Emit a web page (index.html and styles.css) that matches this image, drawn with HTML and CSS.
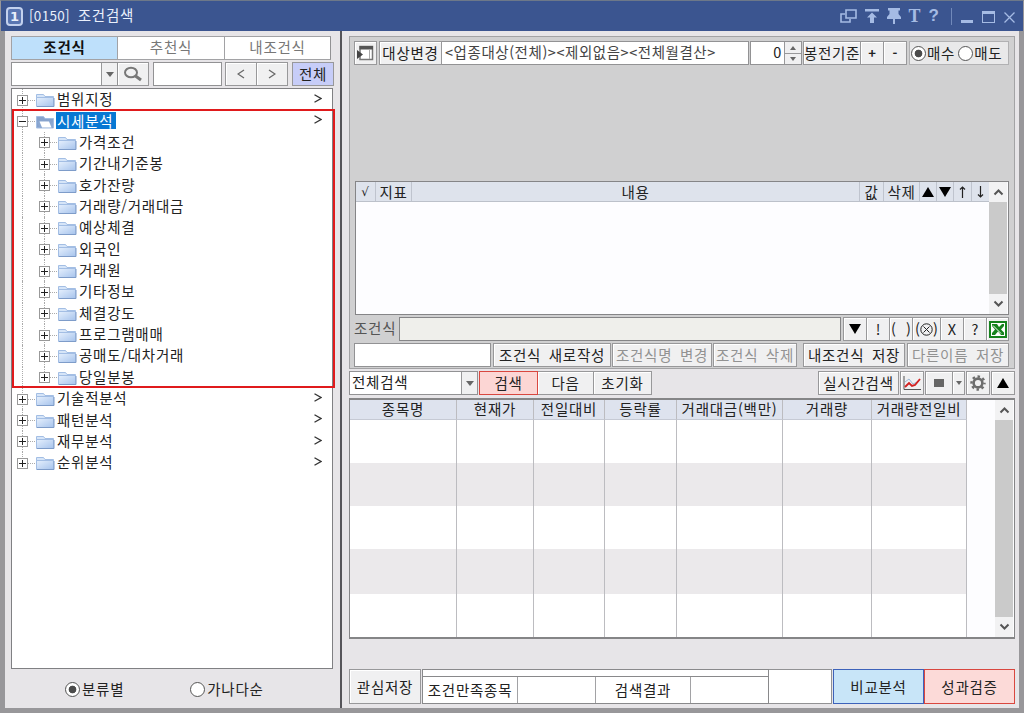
FILE: index.html
```html
<!DOCTYPE html>
<html lang="ko">
<head>
    <meta charset="UTF-8">
    <meta name="viewport" content="width=device-width, initial-scale=1.0">
    <title>[0150] 조건검색</title>
    <link rel="stylesheet" href="styles.css">
</head>
<body>
    <div class="window">
        <header class="titlebar">
            <span class="win-no">1</span>
            <span class="title"><span class="code">[0150]</span> 조건검색</span>
            <div class="win-icons">
                <svg class="i-copy" width="17" height="15" viewBox="0 0 17 15" fill="none" stroke="currentColor" stroke-width="1.6"><path d="M6 1h10v8H6zM5 5H1v8h9v-3"/></svg>
                <svg class="i-up" width="14" height="14" viewBox="0 0 14 14" fill="currentColor"><path d="M0 0h14v2.4H0zM7 3.5l5 5H9V14H5V8.500H2z"/></svg>
                <svg class="i-pin" width="14" height="16" viewBox="0 0 14 16" fill="currentColor"><path d="M1 0h12v2.500h-1.500V6L14 9v2H8v5H6v-5H0V9l2.500-3V2.500H1z"/></svg>
                <span class="i-text">T</span>
                <span class="i-help">?</span>
                <span class="i-sep"></span>
                <span class="i-min"></span>
                <span class="i-max"></span>
                <svg class="i-close" width="11" height="11" viewBox="0 0 11 11" fill="none" stroke="currentColor" stroke-width="1.3"><path d="M.5.5l10 10M10.500.5l-10 10"/></svg>
            </div>
        </header>

        <div class="content">
            <aside class="side">
                <div class="tabs">
                    <div class="tab active">조건식</div>
                    <div class="tab">추천식</div>
                    <div class="tab">내조건식</div>
                </div>
                <div class="side-tools">
                    <div class="combo side-combo"><span class="combo-text"></span><span class="combo-arrow"><i class="caret"></i></span></div>
                    <button class="btn search-btn">
                        <svg width="20" height="16" viewBox="0 0 20 16" fill="none" stroke="#777"><ellipse cx="8" cy="6.500" rx="6" ry="4.800" stroke-width="2"/><path d="M12.500 10l5.500 4" stroke-width="3"/></svg>
                    </button>
                    <div class="field side-field"></div>
                    <button class="btn nav-btn"><svg width="8" height="10" viewBox="0 0 8 10" fill="none" stroke="#666" stroke-width="1.300"><path d="M7 1L1 5l6 4"/></svg></button>
                    <button class="btn nav-btn next"><svg width="8" height="10" viewBox="0 0 8 10" fill="none" stroke="#666" stroke-width="1.300"><path d="M1 1l6 4-6 4"/></svg></button>
                    <button class="btn all-btn">전체</button>
                </div>
                <div class="tree" id="tree"></div>
                <div class="side-foot">
                    <label class="radio checked"><i></i>분류별</label>
                    <label class="radio"><i></i>가나다순</label>
                </div>
            </aside>

            <main class="main">
                <section class="builder">
                    <div class="target-row">
                        <button class="btn panel-btn">
                            <svg width="17" height="16" viewBox="0 0 17 16"><path d="M3 1.500h12.500v13H3z" fill="#fff" stroke="#777" stroke-width="1.500"/><path d="M2.500 1h13.500v3.500H2.500z" fill="#555"/><path d="M12.500 4v10" stroke="#aaa"/><path d="M0 5l6 4.500L0 14z" fill="#444"/></svg>
                        </button>
                        <button class="btn target-btn">대상변경</button>
                        <div class="field target-field">&lt;업종대상(전체)&gt;&lt;제외없음&gt;&lt;전체월결산&gt;</div>
                        <div class="spin"><span class="spin-num">0</span><span class="spin-arrows"><b><i class="caret up"></i></b><b><i class="caret"></i></b></span></div>
                        <div class="bar-group"><button class="btn bar-btn">봉전기준</button><button class="btn pm">+</button><button class="btn pm">-</button></div>
                        <div class="trade"><label class="radio checked"><i></i>매수</label><label class="radio"><i></i>매도</label></div>
                    </div>

                    <div class="rules">
                        <div class="rules-head">
                            <span>√</span><span>지표</span><span>내용</span><span>값</span><span>삭제</span>
                            <span><i class="tri up"></i></span><span><i class="tri"></i></span>
                            <span><svg width="9" height="12" viewBox="0 0 9 12" fill="none" stroke="#222" stroke-width="1.200"><path d="M4.500 12V1M2 3.500L4.500 1 7 3.500"/></svg></span>
                            <span><svg width="9" height="12" viewBox="0 0 9 12" fill="none" stroke="#222" stroke-width="1.200"><path d="M4.500 0v11M2 8.500L4.500 11 7 8.500"/></svg></span>
                        </div>
                        <div class="scroll">
                            <svg width="11" height="8" viewBox="0 0 11 8" fill="none" stroke="#555" stroke-width="2"><path d="M1.500 6.500l4-4 4 4"/></svg>
                            <div class="thumb"></div>
                            <svg width="11" height="8" viewBox="0 0 11 8" fill="none" stroke="#555" stroke-width="2"><path d="M1.500 1.500l4 4 4-4"/></svg>
                        </div>
                    </div>

                    <div class="expr-row">
                        <span class="expr-label">조건식</span>
                        <div class="field expr-field"></div>
                        <div class="ops">
                            <button class="btn"><i class="tri"></i></button>
                            <button class="btn">!</button>
                            <button class="btn paren">( )</button>
                            <button class="btn nopar">(<svg width="13" height="13" viewBox="0 0 13 13" fill="none" stroke="#222"><circle cx="6.500" cy="6.500" r="5.700"/><path d="M3.500 3.500l6 6M9.500 3.500l-6 6"/></svg>)</button>
                            <button class="btn">X</button>
                            <button class="btn">?</button>
                            <button class="btn">
                                <svg width="18" height="17" viewBox="0 0 18 17"><path d="M1 1h16v15H1z" fill="#fff" stroke="#16831d" stroke-width="2"/><path d="M3 3h5l2 3 3-3h2v2l-3 3.500 3 3V14h-3l-3-3.500L6 14H3v-2l3-3.500L3 5z" fill="#16831d"/><path d="M4 4.500l8 8" stroke="#fff" stroke-width="1"/></svg>
                            </button>
                        </div>
                    </div>

                    <div class="save-row">
                        <div class="field name-field"></div>
                        <button class="btn new-btn">조건식 새로작성</button>
                        <button class="btn rename-btn off">조건식명 변경</button>
                        <button class="btn delete-btn off">조건식 삭제</button>
                        <button class="btn save-btn">내조건식 저장</button>
                        <button class="btn saveas-btn off">다른이름 저장</button>
                    </div>
                </section>

                <div class="find-row">
                    <div class="combo find-combo"><span class="combo-text">전체검색</span><span class="combo-arrow"><i class="caret"></i></span></div>
                    <button class="btn find-btn">검색</button>
                    <button class="btn more-btn">다음</button>
                    <button class="btn reset-btn">초기화</button>
                    <button class="btn live-btn">실시간검색</button>
                    <button class="btn tool">
                        <svg width="18" height="15" viewBox="0 0 18 15" fill="none"><path d="M1 0v13.500h17" stroke="#555"/><path d="M2 6l4-3 4 5 6-3" stroke="#9bb7d6"/><path d="M2 11l4-4 3 3 3-1 5-6" stroke="#d22222" stroke-width="1.900"/></svg>
                    </button>
                    <div class="stop-group"><button class="btn stop-btn"><i class="stop"></i></button><button class="btn stop-arrow"><i class="caret small"></i></button></div>
                    <button class="btn tool">
                        <svg width="16" height="16" viewBox="0 0 16 16" fill="none" stroke="#6d6d6d"><circle cx="8" cy="8" r="4.400" stroke-width="2.600"/><circle cx="8" cy="8" r="6.500" stroke-width="2.400" stroke-dasharray="2.500 2.605" stroke-dashoffset="1.250"/></svg>
                    </button>
                    <button class="btn tool"><i class="tri up"></i></button>
                </div>

                <div class="result">
                    <div class="grid" id="grid"></div>
                    <div class="scroll">
                        <svg width="11" height="8" viewBox="0 0 11 8" fill="none" stroke="#555" stroke-width="2"><path d="M1.500 6.500l4-4 4 4"/></svg>
                        <div class="thumb"></div>
                        <svg width="11" height="8" viewBox="0 0 11 8" fill="none" stroke="#555" stroke-width="2"><path d="M1.500 1.500l4 4 4-4"/></svg>
                    </div>
                </div>

                <footer class="foot">
                    <button class="btn fav-btn">관심저장</button>
                    <div class="summary">
                        <div class="progress"></div>
                        <div class="summary-cells"><span>조건만족종목</span><span></span><span>검색결과</span><span></span></div>
                    </div>
                    <div class="foot-box"></div>
                    <button class="btn compare-btn">비교분석</button>
                    <button class="btn verify-btn">성과검증</button>
                </footer>
            </main>
        </div>
    </div>

    <script>
        const tree = [
            { name: "범위지정" },
            {
                name: "시세분석",
                open: true,
                children: ["가격조건", "기간내기준봉", "호가잔량", "거래량/거래대금", "예상체결", "외국인",
                    "거래원", "기타정보", "체결강도", "프로그램매매", "공매도/대차거래", "당일분봉"]
            },
            { name: "기술적분석" },
            { name: "패턴분석" },
            { name: "재무분석" },
            { name: "순위분석" }
        ];

        const columns = ["종목명", "현재가", "전일대비", "등락률", "거래대금(백만)", "거래량", "거래량전일비"];

        function folder(open) {
            const front = open
                ? '<path d="M4 6h11l-1 2 3-1v6H4L1 7z" fill="#8ba8d2"/><path d="M3.500 6.500h9.500l2.500 6H6z" fill="#fff"/>'
                : '<path d="M.5 4.500h17v9H.5z" fill="url(#fg)" stroke="#a3bee4"/><path d="M1 13.500h17V5" stroke="#7e9cc9" fill="none"/>';
            return `<svg class="folder" width="19" height="15" viewBox="0 0 19 15">
                <path d="M.5 13V1.500h7l1.500 2h8.500V13z" fill="${open ? '#87a3cd' : '#d6e5f8'}" stroke="#a3bee4"/>${front}</svg>`;
        }

        function row(name, level, open) {
            const arrow = level === 0
                ? '<svg class="go" width="8" height="9" viewBox="0 0 8 9" fill="none" stroke="#333" stroke-width="1.3"><path d="M.5.8L7 4.500.5 8.200"/></svg>'
                : '';
            return `<div class="node level${level}">
                <span class="toggle ${open ? 'minus' : ''}"></span><span class="dots"></span>${folder(open)}
                <span class="name ${open ? 'selected' : ''}">${name}</span>${arrow}
            </div>`;
        }

        document.getElementById('tree').innerHTML =
            '<svg class="defs" width="0" height="0"><linearGradient id="fg" x2="1" y2="1"><stop stop-color="#e6f0fd"/><stop offset="1" stop-color="#a6c3ec"/></linearGradient></svg>' +
            tree.map(item => {
                const head = row(item.name, 0, item.open);
                if (!item.children) return head;
                return `<div class="branch">${head}<div class="children">${item.children.map(c => row(c, 1)).join('')}</div></div>`;
            }).join('');

        // header and five empty rows
        let cells = columns.map(c => `<span class="th">${c}</span>`).join('');
        for (let r = 0; r < 5; r++) {
            cells += columns.map(() => `<span class="td ${r % 2 ? 'even' : ''}"></span>`).join('');
        }
        document.getElementById('grid').innerHTML = cells;
    </script>
</body>
</html>
```
FILE: styles.css
```css
* {
    margin: 0;
    padding: 0;
    box-sizing: border-box;
}

body {
    width: 1024px;
    height: 713px;
    overflow: hidden;
    font-family: "Noto Sans CJK KR", sans-serif;
    font-size: 14.5px;
    line-height: 20px;
    letter-spacing: 0.75px;
    word-spacing: 2.8px;
    color: #222;
    background: #98979a;
}

i {
    font-style: normal;
}

svg {
    display: block;
    flex: none;
}

.window {
    height: 713px;
    display: flex;
    flex-direction: column;
    border: solid #98979a;
    border-width: 1px 1px 5px;
    border-top-color: #6d7889;
}

.titlebar {
    height: 30px;
    flex: none;
    display: flex;
    align-items: center;
    background: #3b5590;
    color: #e9effb;
    padding: 0 8px 0 5px;
}

.win-no {
    width: 17px;
    height: 19px;
    border: 2px solid #c3d1ee;
    border-radius: 4px;
    background: #5a76b2;
    font: bold 13px/15px "DejaVu Sans", sans-serif;
    letter-spacing: 0;
    text-align: center;
}

.title {
    margin-left: 6px;
    height: 22px;
    word-spacing: 3px;
}

.title .code {
    letter-spacing: 0.3px;
    font-size: 13.5px;
}

.win-icons {
    margin-left: auto;
    display: flex;
    align-items: center;
    color: #a5bbe4;
    height: 30px;
}

.i-up {
    margin-left: 8px;
}

.i-pin {
    margin-left: 8px;
}

.i-text,
.i-help {
    font: bold 18px/20px "Liberation Serif", serif;
    letter-spacing: 0;
    margin-left: 8px;
}

.i-help {
    font: bold 17px/20px "Liberation Sans", sans-serif;
}

.i-sep {
    width: 1px;
    height: 17px;
    background: #7189ba;
    margin-left: 12px;
}

.i-min {
    width: 12px;
    height: 3px;
    background: currentColor;
    margin: 10px 0 0 9px;
}

.i-max {
    width: 13px;
    height: 12px;
    border: 1px solid;
    border-top-width: 3px;
    margin: 2px 0 0 9px;
}

.i-close {
    margin: 2px 0 0 9px;
}

.content {
    flex: 1;
    min-height: 0;
    display: flex;
    margin: 0 4px;
    background: #e7e5e8;
}

.side {
    width: 337px;
    flex: none;
    border-right: 2px solid #56555a;
    padding: 5px 0 0 6px;
}

.main {
    flex: 1;
    min-width: 0;
    padding: 5px 0 0 7px;
}

.btn {
    display: flex;
    align-items: center;
    justify-content: center;
    flex: none;
    height: 24px;
    border: 1px solid #98989a;
    background: #f0f0f1;
    box-shadow: inset 1px 1px #fff;
    font: inherit;
    letter-spacing: inherit;
    word-spacing: inherit;
    color: #222;
    white-space: nowrap;
}

.btn.off {
    color: #929292;
}

.field,
.combo {
    flex: none;
    height: 24px;
    background: #fff;
    border: 1px solid #929294;
    white-space: nowrap;
}

.combo {
    display: flex;
}

.combo-text {
    flex: 1;
    padding-left: 2px;
}

.combo-arrow {
    width: 16px;
    display: flex;
    align-items: center;
    justify-content: center;
    border-left: 1px solid #98989a;
    background: #f0f0f1;
}

.caret {
    border: 4px solid transparent;
    border-top: 5px solid #666;
    border-bottom: 0;
}

.caret.up {
    border-top: 0;
    border-bottom: 5px solid #666;
}

.caret.small {
    border-width: 4px 3px 0;
}

.tri {
    border: 6px solid transparent;
    border-top: 10px solid #000;
    border-bottom: 0;
}

.tri.up {
    border-top: 0;
    border-bottom: 10px solid #000;
}

/* left panel */
.tabs {
    display: grid;
    grid-template-columns: 105px 107px 1fr;
    width: 320px;
    height: 24px;
    border: 1px solid #a2a2a5;
    border-right-color: #929294;
}

.tab {
    text-align: center;
    background: #fff;
    color: #777;
    border-left: 1px solid #a2a2a5;
}

.tab.active {
    background: #bee0fb;
    color: #111;
    font-weight: bold;
    border-left: 0;
}

.side-tools {
    display: flex;
    margin: 2px 0;
}

.side-combo {
    width: 107px;
}

.search-btn {
    width: 31px;
    border-left: 0;
}

.side-field {
    width: 69px;
    margin: 0 3px 0 4px;
}

.nav-btn {
    width: 32px;
}

.nav-btn.next {
    border-left: 0;
    width: 31px;
}

.all-btn {
    width: 42px;
    margin-left: 4px;
    background: #c7cdf8;
    box-shadow: none;
}

.tree {
    width: 322px;
    height: 581px;
    background: #fff;
    border: 1px solid #808083;
}

.defs {
    position: absolute;
}

.node {
    height: 21.37px;
    display: flex;
    align-items: center;
    position: relative;
    padding-left: 5px;
}

/* vertical dotted guide behind the toggles */
.node::before,
.level1::after {
    content: "";
    position: absolute;
    left: 10px;
    top: 0;
    bottom: 0;
    border-left: 1px dotted #aaa;
}

.level1 {
    padding-left: 27px;
}

.level1::after {
    left: 32px;
}

.tree > .node:last-child::before,
.level1:last-child::after {
    bottom: 10px;
}

.toggle {
    width: 11px;
    height: 11px;
    margin-top: 1px;
    border: 1px solid #999;
    background:
        linear-gradient(#222, #222) center / 7px 1px no-repeat,
        linear-gradient(#222, #222) center / 1px 7px no-repeat,
        #fff;
    z-index: 1;
}

.toggle.minus {
    background: linear-gradient(#222, #222) center / 7px 1px no-repeat, #fff;
}

.dots {
    width: 7px;
    margin: 1px 1px 0 0;
    border-top: 1px dotted #aaa;
}

.folder {
    margin-top: 2px;
}

.name {
    margin: -2px 0 0 1px;
    padding: 0 1px;
    height: 17px;
    line-height: 18px;
}

.name.selected {
    background: #0878d3;
    color: #fff;
    padding-right: 3px;
}

.go {
    position: absolute;
    top: 5px;
    right: 10px;
}

.branch {
    position: relative;
}

/* highlight frame drawn over the open branch */
.branch::after {
    content: "";
    position: absolute;
    left: 0;
    right: -3px;
    top: -1px;
    bottom: 0;
    border: 2px solid #e01a1c;
    z-index: 2;
}

.side-foot {
    display: flex;
    gap: 66px;
    padding: 10px 0 0 54px;
}

.radio {
    display: flex;
    align-items: center;
    white-space: nowrap;
}

.radio i {
    width: 15px;
    height: 15px;
    border: 1px solid #555;
    border-radius: 50%;
    background: #fff;
    margin-right: 2px;
}

.radio.checked i {
    background: radial-gradient(#4b4b4b 0 3.5px, #fff 4.2px);
}

/* condition builder */
.builder {
    width: 666px;
    height: 333px;
    background: #d0d0d1;
    border: 1px solid #a3a3a5;
    padding: 4px 0 0 4px;
}

.target-row,
.expr-row,
.save-row,
.find-row,
.foot {
    display: flex;
}

.panel-btn {
    width: 23px;
    margin-right: 2px;
}

.target-btn {
    width: 63px;
}

.target-field {
    width: 307px;
    border-left: 0;
    padding-left: 3px;
    letter-spacing: 0.55px;
    color: #444;
}

.spin {
    width: 52px;
    height: 24px;
    margin: 0 1px;
    display: flex;
    border: 1px solid #929294;
    background: #fff;
}

.spin-num {
    flex: 1;
    text-align: right;
    padding-right: 2px;
}

.spin-arrows {
    width: 17px;
    border-left: 1px solid #98989a;
    background: #f0f0f1;
}

.spin-arrows b {
    height: 11px;
    display: flex;
    align-items: center;
    justify-content: center;
}

.spin-arrows b + b {
    border-top: 1px solid #98989a;
}

.spin-arrows .caret {
    border-left-width: 3px;
    border-right-width: 3px;
}

.spin-arrows .caret.up {
    border-bottom-width: 4px;
}

.spin-arrows .caret:not(.up) {
    border-top-width: 4px;
}

.bar-group {
    display: flex;
}

.bar-btn {
    width: 58px;
    letter-spacing: 0.6px;
}

.pm {
    width: 23px;
    border-left: 0;
    letter-spacing: 0;
    font-weight: bold;
    font-size: 13px;
}

.trade {
    display: flex;
    align-items: center;
    width: 100px;
    height: 24px;
    margin-left: 2px;
    padding-left: 1px;
    border: 1px solid #b1b1b3;
    background: #e9e9ea;
    gap: 3px;
}

.trade .radio i {
    margin-right: 1px;
}

.rules {
    width: 654px;
    height: 134px;
    margin: 116px 0 0 1px;
    display: flex;
    background: #fdfdff;
    border: 1px solid #858587;
}

.rules-head {
    flex: 1;
    height: 20px;
    display: grid;
    grid-template-columns: 20px 36px 448px 24px 36px 17px 17px 18px 1fr;
    background: #dee3ec;
    border-bottom: 1px solid #bcc1ca;
}

.rules-head span {
    display: flex;
    align-items: center;
    justify-content: center;
    border-right: 1px solid #bfc4ce;
    line-height: 19px;
}

.rules-head span:first-child {
    font: 12px "DejaVu Sans", sans-serif;
}

.rules-head span:last-child {
    border-right: 0;
}

.scroll {
    width: 18px;
    flex: none;
    margin-right: 1px;
    display: flex;
    flex-direction: column;
    align-items: center;
    gap: 6px;
    padding: 6px 0;
    background: #f2f2f3;
}

.thumb {
    flex: 1;
    width: 100%;
    background: #cacaca;
}

.expr-row {
    margin-top: 2px;
}

.expr-label {
    width: 45px;
    color: #555;
    line-height: 21px;
}

.expr-field {
    width: 442px;
    background: #efefeb;
    border-color: #858587;
}

.ops {
    display: flex;
    margin-left: 2px;
}

.ops .btn {
    width: 23px;
    letter-spacing: 0;
    border-right: 0;
}

.ops .btn.nopar {
    width: 28px;
}

.ops .btn.paren {
    word-spacing: 6px;
}

.ops .btn:last-child {
    border-right: 1px solid #98989a;
}

.save-row {
    margin-top: 2px;
}

.name-field {
    width: 137px;
    margin-right: 2px;
}

.new-btn {
    width: 118px;
    margin-right: 1px;
}

.rename-btn {
    width: 100px;
    margin-right: 1px;
}

.delete-btn {
    width: 84px;
    margin-right: 6px;
}

.save-btn {
    width: 102px;
    margin-right: 2px;
}

.saveas-btn {
    width: 102px;
}

/* search bar */
.find-row {
    width: 666px;
    margin: 2px 0 3px;
}

.find-combo {
    width: 129px;
    margin-right: 1px;
}

.find-btn {
    width: 59px;
    background: #fcd6d4;
    border: 1px solid #d9473f;
    box-shadow: none;
}

.more-btn {
    width: 56px;
    border-left: 0;
}

.reset-btn {
    width: 58px;
    border-left: 0;
}

.live-btn {
    width: 81px;
    margin: 0 1px 0 auto;
}

.tool {
    width: 24px;
}

.stop-group {
    display: flex;
    margin: 0 1px;
}

.stop-btn {
    width: 28px;
}

.stop {
    width: 10px;
    height: 8px;
    background: #666;
}

.stop-arrow {
    width: 12px;
    border-left: 0;
}

.tool:last-child {
    margin-left: 1px;
}

/* results */
.result {
    width: 666px;
    height: 241px;
    display: flex;
    justify-content: space-between;
    background: #fdfdff;
    border: 1px solid #858587;
    border-width: 2px 1px;
}

.grid {
    width: 617px;
    display: grid;
    grid-template-columns: 107px 77px 71px 72px 106px 89px 95px;
    grid-template-rows: 20px 43px 43px 43px 45px 43px;
}

.th,
.td {
    border-right: 1px solid #bcbcc0;
    background: #fff;
}

.th {
    background: #dee3ee;
    border-bottom: 1px solid #c6cad4;
    text-align: center;
    line-height: 17px;
    white-space: nowrap;
}

.td.even {
    background: #ebe9eb;
}

.foot {
    width: 666px;
    margin-top: 30px;
}

.foot .btn {
    height: 35px;
}

.fav-btn {
    width: 72px;
    margin-right: 1px;
}

.summary {
    width: 347px;
    height: 35px;
    border: 1px solid #89898b;
    background: #fff;
}

.progress {
    height: 7px;
    border-bottom: 1px solid #89898b;
}

.summary-cells {
    display: grid;
    grid-template-columns: 95px 78px 95px 1fr;
    height: 26px;
}

.summary-cells span {
    border-right: 1px solid #a2a2a5;
    text-align: center;
    line-height: 25px;
    white-space: nowrap;
}

.summary-cells span:last-child {
    border-right: 0;
}

.foot-box {
    width: 63px;
    height: 35px;
    border: 1px solid #929294;
    border-left: 0;
    background: #fff;
    margin-right: 1px;
}

.foot .compare-btn {
    width: 91px;
    background: #c8e5f8;
    border: 1px solid #3d62ba;
    box-shadow: none;
}

.foot .verify-btn {
    width: 91px;
    background: #fcdad8;
    border: 1px solid #d9473f;
    box-shadow: none;
}
```
